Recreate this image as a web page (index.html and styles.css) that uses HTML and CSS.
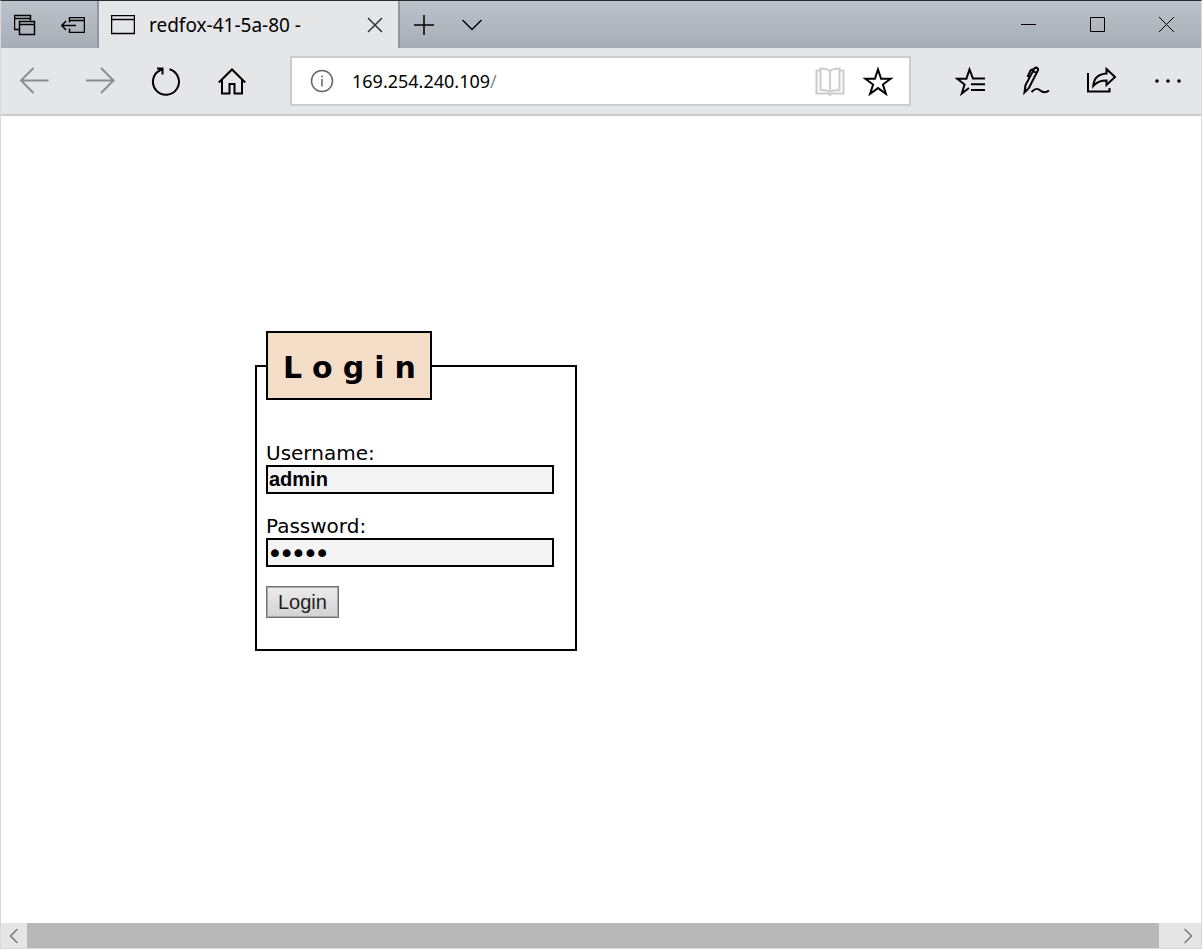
FILE: index.html
```html
<!DOCTYPE html>
<html lang="en">
<head>
<meta charset="utf-8">
<title>redfox-41-5a-80 -</title>
<link rel="stylesheet" href="styles.css">
</head>
<body>
<div class="window">
	<!-- title bar and tabs -->
	<header class="titlebar">
		<button class="tb-btn" type="button" aria-label="Tabs you've set aside">
			<svg width="22" height="22" viewBox="0 0 22 22"><path d="M5 15.500H.5v-14h16v5M.5 4.500h16M5.500 7.500h15v13h-15zM5.500 10.500h15"/></svg>
		</button>
		<button class="tb-btn" type="button" aria-label="Set these tabs aside">
			<svg width="24" height="16" viewBox="0 0 24 16"><path d="M8.500 5.500V.5h15v15h-15v-4M8.500 3.500h15M1 8.500h14M5 4L.8 8.500 5 13"/></svg>
		</button>
		<div class="tab">
			<svg width="24" height="20" viewBox="0 0 24 20"><path d="M.5.5h23v18H.5zM.5 4.500h23"/></svg>
			<span class="tab-title">redfox-41-5a-80 -</span>
			<button class="tab-close" type="button" aria-label="Close tab">
				<svg width="16" height="16" viewBox="0 0 16 16"><path d="M1 1l14 14M15 1L1 15"/></svg>
			</button>
		</div>
		<button class="tb-btn" type="button" aria-label="New tab">
			<svg width="20" height="20" viewBox="0 0 20 20"><path d="M0 10h20M10 0v20"/></svg>
		</button>
		<button class="tb-btn" type="button" aria-label="Show tab previews">
			<svg width="20" height="12" viewBox="0 0 20 12"><path d="M.5 1l9.500 9.500L19.500 1"/></svg>
		</button>
		<div class="win-controls">
			<button class="win-btn" type="button" aria-label="Minimize">
				<svg class="thin" width="15" height="15" viewBox="0 0 15 15"><path d="M0 7.500h15"/></svg>
			</button>
			<button class="win-btn" type="button" aria-label="Maximize">
				<svg class="thin" width="15" height="15" viewBox="0 0 15 15"><path d="M.5.5h14v14H.5z"/></svg>
			</button>
			<button class="win-btn" type="button" aria-label="Close">
				<svg class="thin" width="15" height="15" viewBox="0 0 15 15"><path d="M0 0l15 15M15 0L0 15"/></svg>
			</button>
		</div>
	</header>

	<!-- navigation -->
	<nav class="toolbar">
		<button class="nav-btn off" type="button" aria-label="Back">
			<svg width="30" height="28" viewBox="0 0 30 28"><path d="M29.500 13.500H2M14.500 1L2 13.500 14.500 26"/></svg>
		</button>
		<button class="nav-btn off" type="button" aria-label="Forward">
			<svg width="30" height="28" viewBox="0 0 30 28"><path d="M1 13.500h27M16 1l12.500 12.500L16 26"/></svg>
		</button>
		<button class="nav-btn" type="button" aria-label="Refresh">
			<svg width="30" height="30" viewBox="0 0 30 30"><path d="M18.500 3.300A13 13 0 1 1 9.500 4L11 3M6 2.500h5.500v6"/></svg>
		</button>
		<button class="nav-btn" type="button" aria-label="Home">
			<svg width="30" height="30" viewBox="0 0 30 30"><path d="M1.800 16.500L15 3.500l13.200 13M5 14v13.500h7.500V18h5v9.500H25V14"/></svg>
		</button>
		<div class="address">
			<svg class="info" width="24" height="24" viewBox="0 0 24 24"><circle cx="12" cy="12" r="10.500"/><path d="M12 10v7.500M12 6.500v2"/></svg>
			<span class="url" role="textbox" aria-label="Address">169.254.240.109<span class="slash">/</span></span>
			<button class="addr-btn reading" type="button" aria-label="Reading view">
				<svg width="30" height="30" viewBox="0 0 30 30"><path d="M5 4.500H1.500v23H13l2 1.500 2-1.500h11.500v-23H25M15 5Q12 2.500 5.500 2.500v21.500Q12 24 15 26 18 24 24.500 24V2.500Q18 2.500 15 5v21"/></svg>
			</button>
			<button class="addr-btn" type="button" aria-label="Add to favorites">
				<svg width="30" height="30" viewBox="0 0 30 30"><path d="M15 3.500l3.100 9.200h9.600l-7.800 5.800 3 9.300-7.900-5.700-7.900 5.700 3-9.300-7.800-5.800h9.600z"/></svg>
			</button>
		</div>
		<button class="nav-btn" type="button" aria-label="Favorites">
			<svg width="30" height="30" viewBox="0 0 30 30"><path d="M30 12.500H18L14.500 3.500l-3.100 9.200H2.300l7.300 5.800-2.800 9 7.200-5.500M16 18.200h14M16 24h14"/></svg>
		</button>
		<button class="nav-btn" type="button" aria-label="Add notes">
			<svg width="30" height="30" viewBox="0 0 30 30"><path d="M3.500 26.500l1-7.500L13.500 2.300q1.500-1.500 3.300.2.600 1-.1 2.200L7.800 22.200zM12 5l4 2.300M12.500 3.300l-2.800.7L6.500 11M10.500 26c4-4 6-4 8.500-1.700 3 2.500 5.500 3 9 .2"/></svg>
		</button>
		<button class="nav-btn" type="button" aria-label="Share">
			<svg width="30" height="30" viewBox="0 0 30 30"><path d="M1 7v18.500h21.500V22M19.500 3l8.500 8-8.500 8v-4.500c-6 0-10 1.500-13.200 5.500C6.800 12.500 11 8 19.500 7.500z"/></svg>
		</button>
		<button class="nav-btn" type="button" aria-label="Settings and more">
			<svg class="dots" width="28" height="6" viewBox="0 0 28 6"><circle cx="3" cy="3" r="1.800"/><circle cx="14" cy="3" r="1.800"/><circle cx="25" cy="3" r="1.800"/></svg>
		</button>
	</nav>

	<main class="page">
		<form class="login" action="#" method="post">
			<fieldset>
				<legend>Login</legend>
				<div class="field">
					<label for="username">Username:</label>
					<input type="text" id="username" name="username" value="admin">
				</div>
				<div class="field">
					<label for="password">Password:</label>
					<input class="secret" type="password" id="password" name="password" value="admin">
				</div>
				<button class="submit" type="submit">Login</button>
			</fieldset>
		</form>
	</main>

	<!-- horizontal scrollbar -->
	<div class="scrollbar">
		<button class="sb-btn" type="button" aria-label="Scroll left">
			<svg width="8" height="16" viewBox="0 0 8 16"><path d="M7.500 1l-7 7 7 7"/></svg>
		</button>
		<div class="thumb"></div>
		<button class="sb-btn" type="button" aria-label="Scroll right">
			<svg width="8" height="16" viewBox="0 0 8 16"><path d="M.5 1l7 7-7 7"/></svg>
		</button>
	</div>
</div>
</body>
</html>
```
FILE: styles.css
```css
*{box-sizing:border-box;}
body{margin:0;background:#fff;color:#000;font-family:"Noto Sans","Open Sans",sans-serif;}
button{margin:0;padding:0;border:0;background:none;color:inherit;display:flex;align-items:center;justify-content:center;}
svg{display:block;flex:none;fill:none;stroke:currentColor;stroke-width:1.5;}

.window{display:flex;flex-direction:column;min-height:100vh;border:1px solid #d9d9d9;border-top-color:#2b2a2f;}

/* title bar */
.titlebar{display:flex;height:47px;background:linear-gradient(#bcc3cb,#a6adb6);}
.tb-btn{width:48px;}
.tab{display:flex;align-items:center;width:303px;padding:0 7px 0 12px;border-left:2px solid #91979e;border-right:2px solid #91979e;background:#e5e6e8;}
.tab-title{flex:1;margin-left:14px;font-size:19px;line-height:24px;white-space:nowrap;}
.tab-close{width:32px;height:32px;color:#333;}
.win-controls{display:flex;margin-left:auto;}
.win-btn{width:69px;}
.thin{stroke-width:1;}

/* toolbar */
.toolbar{display:flex;align-items:center;height:68px;border-bottom:2px solid #ccc;background:#e5e6e8;}
.nav-btn{width:66px;height:48px;}
.toolbar svg{stroke-width:2;}
.off{color:#8b8c8e;}
.address{display:flex;flex:1;align-items:center;height:50px;margin:0 26px 0 25px;padding:0 7px 0 18px;border:2px solid #ccc;background:#fff;}
.toolbar .info{color:#666;stroke-width:1.5;}
.url{flex:1;margin-left:18px;font-size:18px;line-height:24px;}
.slash{color:#888;}
.addr-btn{width:48px;height:44px;}
.reading{color:#ccc;}
.toolbar .dots{fill:currentColor;stroke:none;}

/* login form */
.page{flex:1;padding:215px 20px 20px 254px;font-family:Verdana,"DejaVu Sans",sans-serif;}
.login{max-width:322px;}
fieldset{margin:0;padding:40px 21px 31px 9px;border:2px solid #000;}
legend{padding:14px 4px 10px 15px;border:2px solid #000;background:#f5dec7;font-size:30px;font-weight:bold;line-height:41px;letter-spacing:10px;}
.field{margin-bottom:19px;}
.field label{display:block;padding-top:2px;font-size:20px;line-height:23px;}
.field input{display:block;width:100%;height:29px;padding:0 1px;border:2px solid #000;border-radius:0;background:#f4f4f4;color:#000;font:bold 20px Arial,"Liberation Sans",sans-serif;}
.field .secret{font:20px "DejaVu Sans",sans-serif;-webkit-text-stroke:2px #000;}
.submit{height:32px;padding:0 11px;border:1px solid #707070;background:linear-gradient(#ececec,#d2d2d2);box-shadow:inset 0 0 0 1px #a9a9a9;color:#222;font:20px Arial,"Liberation Sans",sans-serif;}

/* scrollbar */
.scrollbar{display:flex;height:25px;background:#e5e5e5;}
.sb-btn{width:26px;color:#777;}
.thumb{flex:1;margin-right:16px;background:#b8b8b8;}
```
